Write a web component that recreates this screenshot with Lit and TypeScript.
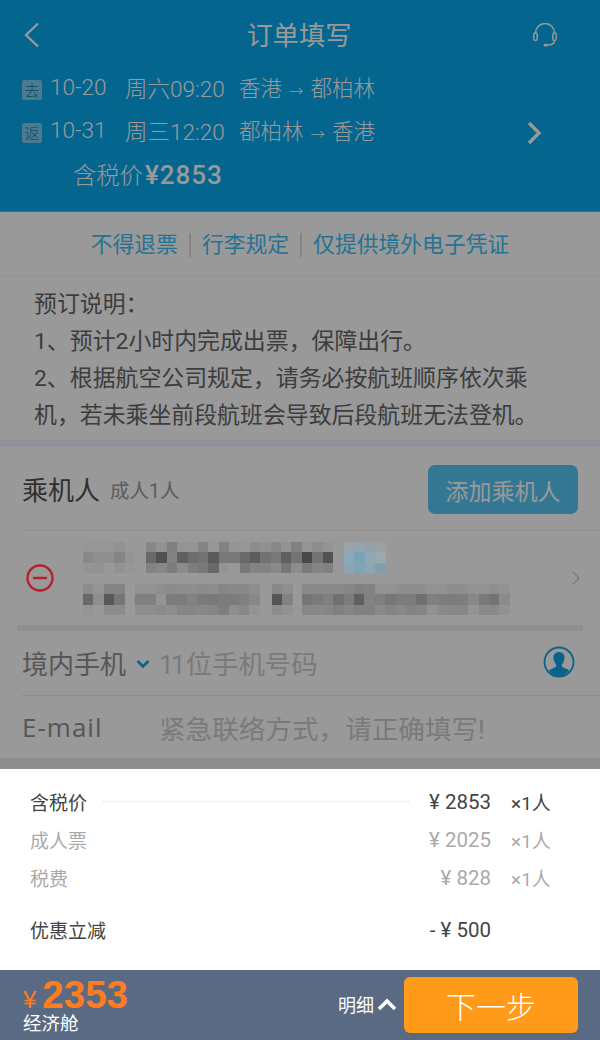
import { LitElement, html, css } from 'lit';
import { customElement } from 'lit/decorators.js';

// mosaic and the red minus sit above the dim layer, so these are the final colours on screen
const gray = (v: number) => `rgb(${v},${v},${v})`;
const tint = (r: number, g: number, b: number) => `rgb(${r},${g},${b})`;

type Block = { x: number; lines: string[][] };
const g = (vals: number[]) => vals.map(gray);

const firstRow: Block[] = [
  { x: 83, lines: [g([150, 150, 150, 146, 152]), g([136, 143, 143, 133, 148]), g([148, 146, 153, 146, 150])] },
  {
    x: 146,
    lines: [
      g([135, 146, 128, 148, 148, 132, 150, 130, 148, 150, 140, 145, 135, 146, 128, 148, 142, 148]),
      g([105, 80, 130, 95, 110, 115, 90, 120, 120, 105, 92, 115, 120, 95, 115, 72, 115, 82]),
      g([130, 135, 125, 140, 125, 120, 105, 148, 152, 120, 132, 130, 138, 118, 140, 122, 132, 128])
    ]
  },
  {
    x: 344,
    lines: [
      [tint(154, 163, 170), tint(150, 163, 172), tint(152, 160, 166), tint(154, 160, 164)],
      [tint(138, 168, 184), tint(123, 163, 184), tint(143, 168, 180), tint(154, 168, 176)],
      [tint(138, 165, 181), tint(128, 163, 181), tint(140, 165, 176), tint(127, 159, 172)]
    ]
  }
];

const secondRow: Block[] = [
  { x: 83, lines: [g([140, 148, 132, 132]), g([105, 142, 88, 118]), g([148, 153, 140, 140])] },
  {
    x: 135,
    lines: [
      g([146, 146, 142, 140, 142, 142, 140, 142, 134, 136, 136, 142]),
      g([128, 128, 148, 124, 124, 130, 122, 122, 124, 124, 128, 136]),
      g([142, 142, 138, 142, 134, 134, 136, 134, 126, 142, 136, 148])
    ]
  },
  { x: 272, lines: [g([135, 142]), g([85, 130]), g([140, 146])] },
  {
    x: 302,
    lines: [
      g([138, 138, 138, 138, 134, 128, 130, 146, 146, 142, 142, 142, 146, 146, 142, 142, 146, 146, 142, 146]),
      g([118, 122, 128, 112, 124, 96, 130, 128, 118, 124, 124, 112, 128, 126, 124, 126, 136, 122, 116, 138]),
      g([136, 136, 134, 128, 134, 128, 128, 138, 132, 136, 130, 134, 146, 138, 136, 134, 148, 138, 138, 146])
    ]
  }
];

@customElement('app-root')
export class AppRoot extends LitElement {
  static styles = css`
    :host {
      display: flex;
      flex-direction: column;
      width: 600px;
      height: 1040px;
      overflow: hidden;
      background: #fff;
      color: #333;
      font-family: Roboto, "Noto Sans CJK SC", sans-serif;
    }
    svg { display: block; }
    .dimmed {
      position: relative;
      height: 769px;
      flex: none;
      overflow: hidden;
    }
    .dim {
      position: absolute;
      inset: 0;
      background: rgba(0, 0, 0, 0.4);
    }
    .header {
      height: 212px;
      box-sizing: border-box;
      background: #07a8ee;
      border-bottom: 1px solid #4cc3f5;
      color: #fff;
      padding: 0 22px;
      font-weight: 300;
    }
    .title-row {
      height: 70px;
      display: grid;
      grid-template-columns: 1fr auto 1fr;
      align-items: center;
    }
    .title { font-size: 26.200px; font-weight: 400; margin: -3px 2px 0 0; }
    .headset { justify-self: end; margin-right: 21px; }
    .trip {
      height: 43px;
      display: flex;
      align-items: center;
      font-size: 22.500px;
    }
    .first { margin-top: -2px; }
    .trip > span:not(.tag) { position: relative; top: -3px; }
    .tag {
      width: 20px;
      height: 20px;
      border-radius: 2px;
      background: #7fcdf0;
      color: #0a7cb0;
      font-size: 15px;
      display: flex;
      align-items: center;
      justify-content: center;
      margin-right: 8px;
    }
    .date { width: 75px; }
    .when { width: 114px; }
    .route { flex: 1; font-size: 21.500px; }
    .route i { font-style: normal; font-size: 14px; padding: 0 2px; }
    .nav { margin-right: 36px; }
    .fare {
      padding: 3px 0 0 51px;
      font-size: 23.300px;
      display: flex;
      align-items: baseline;
      gap: 2px;
    }
    .fare b { font-size: 26px; font-weight: 500; letter-spacing: 1px; }
    .links {
      height: 65px;
      display: flex;
      align-items: center;
      justify-content: center;
      font-size: 21.800px;
      color: #3cc0f5;
      border-bottom: 1px dashed #eee;
      padding-top: 1px;
      box-sizing: border-box;
    }
    .links span { line-height: 24px; }
    .links span + span {
      border-left: 2px solid #ddd;
      margin-left: 11px;
      padding-left: 11px;
    }
    .notes {
      padding: 9px 60px 9px 34px;
      font-size: 22.900px;
      line-height: 37px;
      color: #666;
      height: 163px;
      box-sizing: border-box;
    }
    .band { height: 7px; background: #f0f0fa; }
    .pax-head {
      height: 84px;
      box-sizing: border-box;
      margin-left: 22px;
      padding-right: 22px;
      border-bottom: 1px solid #eee;
      display: flex;
      align-items: center;
    }
    .pax-head h2 { margin: 0; font-size: 26px; font-weight: 400; color: #505050; }
    .pax-head small { font-size: 19.500px; color: #999; margin-left: 10px; flex: 1; padding-top: 2px; }
    .add {
      width: 150px;
      height: 49px;
      margin-top: 2px;
      border-radius: 7px;
      background: #55c6f5;
      color: #fff;
      font-size: 23px;
      display: flex;
      align-items: center;
      justify-content: center;
    }
    .pax {
      height: 94px;
      display: flex;
      align-items: center;
      padding: 0 20px 0 25px;
    }
    .minus { position: relative; z-index: 1; margin-right: 23px; }
    .mosaic { flex: 1; height: 94px; position: relative; z-index: 1; filter: blur(0.6px); }
    .mosaic-row { position: absolute; left: 0; }
    .mosaic-block {
      position: absolute;
      top: 0;
      display: grid;
      grid-auto-flow: column;
      grid-template-rows: repeat(3, 10.300px);
      grid-auto-columns: 10.400px;
    }
    .bar { height: 6px; margin: 0 17px 0 17px; background: #eeeef6; }
    .field {
      height: 65px;
      box-sizing: border-box;
      margin-left: 22px;
      display: flex;
      align-items: center;
      border-bottom: 1px solid #e8e8f4;
      color: #909090;
      font-size: 26px;
    }
    .field .label { width: 137px; }
    .field .hold { color: #ccc; font-size: 26.600px; }
    .phone { padding-bottom: 2px; }
    .phone .label { width: auto; }
    .phone .hold { flex: 1; margin-left: 9px; font-size: 26.400px; }
    .phone .tight { letter-spacing: -3px; margin-right: 3px; }
    .phone .drop { margin: 4px 0 0 10px; }
    .phone .me { margin-right: 25px; }
    .email { height: 62px; border-bottom: 0; }
    .email .label { font-family: "Open Sans", sans-serif; font-size: 26px; letter-spacing: 1px; }
    .band-end { height: 11px; background: #ecece8; }
    .sheet { height: 201px; box-sizing: border-box; padding: 13px 0 0 30px; background: #fff; }
    .line {
      display: grid;
      grid-template-columns: 1fr auto 89px;
      column-gap: 20px;
      align-items: center;
      height: 38px;
      font-size: 19px;
      color: #444;
    }
    .line .num { font-size: 20.500px; margin-top: 2px; }
    .line.sub { color: #aaa; }
    .line.off { margin-top: 14px; }
    .line .name { display: flex; align-items: center; }
    .dots { flex: 1; margin-left: 16px; border-top: 1px dotted #ddd; }
    .footer {
      height: 70px;
      box-sizing: border-box;
      flex: none;
      padding: 7px 22px 7px 23px;
      background: #5a6a83;
      color: #fff;
      display: flex;
      align-items: center;
    }
    .sum { flex: 1; padding-top: 1px; }
    .price {
      color: #ff7d1f;
      font-family: "Liberation Sans", sans-serif;
      font-weight: 700;
      font-size: 38.500px;
      line-height: 38px;
    }
    .price span { font-size: 24px; font-weight: 400; margin-right: 6px; }
    .cabin { font-size: 18.500px; line-height: 22px; margin-top: -6px; }
    .detail { font-size: 18px; display: flex; align-items: center; gap: 3px; margin: 0 7px 2px 0; }
    .next {
      width: 174px;
      height: 56px;
      border-radius: 6px;
      background: #ff9b18;
      font-size: 30px;
      font-weight: 300;
      display: flex;
      align-items: center;
      justify-content: center;
    }
  `;

  private mosaicRow(top: number, blocks: Block[]) {
    return html`<div class="mosaic-row" style="top:${top}px">
      ${blocks.map(
        (b) => html`<div class="mosaic-block" style="left:${b.x - 80}px">
          ${b.lines[0].map((_, col) =>
            b.lines.map((line) => html`<div style="background:${line[col]}"></div>`)
          )}
        </div>`
      )}
    </div>`;
  }

  render() {
    return html`
      <div class="dimmed">
        <div class="header">
          <div class="title-row">
            <svg width="20" height="26" viewBox="0 0 20 26" fill="none" stroke="#fff" stroke-width="2.400">
              <path d="M16 1.500 4 13l12 11.500" />
            </svg>
            <div class="title">订单填写</div>
            <svg class="headset" width="24" height="25" viewBox="0 0 24 25" fill="none" stroke="#fff" stroke-width="1.500">
              <path d="M2.500 10a9.500 9.500 0 0 1 19 0" />
              <rect x="0.800" y="10" width="3.400" height="7.500" rx="1.700" />
              <rect x="19.800" y="10" width="3.400" height="7.500" rx="1.700" />
              <path d="M21.500 17.500c0 2.800-3 4.500-7 4.500" />
              <rect x="10.500" y="20.700" width="4.500" height="2.800" rx="1.400" fill="#fff" stroke="none" />
            </svg>
          </div>
          <div class="trip first">
            <span class="tag">去</span><span class="date">10-20</span><span class="when">周六09:20</span>
            <span class="route">香港 <i>→</i> 都柏林</span>
          </div>
          <div class="trip">
            <span class="tag">返</span><span class="date">10-31</span><span class="when">周三12:20</span>
            <span class="route">都柏林 <i>→</i> 香港</span>
            <svg class="nav" width="16" height="24" viewBox="0 0 16 24" fill="none" stroke="#fff" stroke-width="3.400">
              <path d="M3 2l10 10L3 22" />
            </svg>
          </div>
          <div class="fare">含税价<b>¥2853</b></div>
        </div>

        <div class="links"><span>不得退票</span><span>行李规定</span><span>仅提供境外电子凭证</span></div>
        <div class="notes">
          预订说明：<br />
          1、预计2小时内完成出票，保障出行。<br />
          2、根据航空公司规定，请务必按航班顺序依次乘机，若未乘坐前段航班会导致后段航班无法登机。
        </div>
        <div class="band"></div>

        <div class="pax-head">
          <h2>乘机人</h2>
          <small>成人1人</small>
          <div class="add">添加乘机人</div>
        </div>
        <div class="pax">
          <svg class="minus" width="32" height="32" viewBox="0 0 32 32" fill="none" stroke="#b5222e" stroke-width="2.400">
            <circle cx="15" cy="16" r="12.500" />
            <path d="M8 16h14" />
          </svg>
          <div class="mosaic">
            ${this.mosaicRow(11, firstRow)} ${this.mosaicRow(53, secondRow)}
          </div>
          <svg width="8" height="14" viewBox="0 0 8 14" fill="none" stroke="#ccc" stroke-width="1.200">
            <path d="M1 1l6 6-6 6" />
          </svg>
        </div>
        <div class="bar"></div>

        <div class="field phone">
          <span class="label">境内手机</span>
          <svg class="drop" width="14" height="10" viewBox="0 0 14 10" fill="none" stroke="#12a4e8" stroke-width="2.600">
            <path d="M1.500 2 7 7.500 12.500 2" />
          </svg>
          <span class="hold"><span class="tight">11</span>位手机号码</span>
          <svg class="me" width="32" height="34" viewBox="0 0 32 34">
            <circle cx="16" cy="17" r="14.500" fill="none" stroke="#12a4e8" stroke-width="1.800" />
            <path fill="#12a4e8" d="M16 7c-4 0-6 3-5.500 6.500.3 2.400 1.300 4.500 2.500 5.800v2.400c-1.500 1.200-5 2-7.200 3.600A14 14 0 0 0 16 31a14 14 0 0 0 10.200-5.700c-2.200-1.600-5.700-2.400-7.200-3.600v-2.400c1.200-1.300 2.200-3.400 2.500-5.800C22 10 20 7 16 7z" />
          </svg>
        </div>
        <div class="field email">
          <span class="label">E-mail</span>
          <span class="hold">紧急联络方式，请正确填写!</span>
        </div>
        <div class="band-end"></div>
        <div class="dim"></div>
      </div>

      <div class="sheet">
        <div class="line"><span class="name">含税价<span class="dots"></span></span><span class="num">¥ 2853</span><span>×1人</span></div>
        <div class="line sub"><span class="name">成人票</span><span class="num">¥ 2025</span><span>×1人</span></div>
        <div class="line sub"><span class="name">税费</span><span class="num">¥ 828</span><span>×1人</span></div>
        <div class="line off"><span class="name">优惠立减</span><span class="num">- ¥ 500</span><span></span></div>
      </div>

      <div class="footer">
        <div class="sum">
          <div class="price"><span>¥</span>2353</div>
          <div class="cabin">经济舱</div>
        </div>
        <div class="detail">
          明细
          <svg width="20" height="13" viewBox="0 0 20 13" fill="none" stroke="#fff" stroke-width="3.600">
            <path d="M2 11l8-8 8 8" />
          </svg>
        </div>
        <div class="next">下一步</div>
      </div>
    `;
  }
}
